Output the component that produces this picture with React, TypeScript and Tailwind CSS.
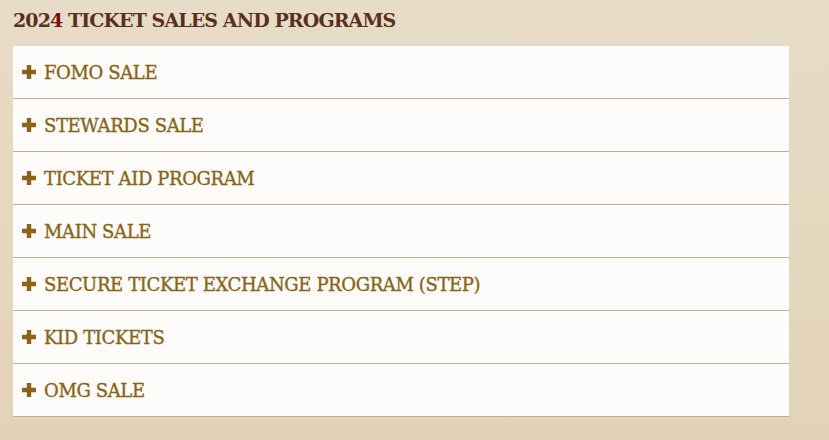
import React from "react";

const items = [
  "FOMO SALE",
  "STEWARDS SALE",
  "TICKET AID PROGRAM",
  "MAIN SALE",
  "SECURE TICKET EXCHANGE PROGRAM (STEP)",
  "KID TICKETS",
  "OMG SALE",
];

function Plus() {
  return (
    <svg width="14" height="14" viewBox="0 0 14 14" className="shrink-0">
      <path d="M4.8 0h4.4v4.8h4.8v4.4H9.2v4.8H4.8V9.2H0V4.8h4.8z" fill="#8a6414" />
    </svg>
  );
}

export default function App() {
  return (
    <div
      className="w-[829px] h-[440px] bg-gradient-to-b from-[#e7dcc7] to-[#e3d3b6] pl-[13px] pt-[8px]"
      style={{ fontFamily: '"DejaVu Serif", "Liberation Serif", serif' }}
    >
      <h2 className="text-[19px] leading-[24px] font-bold text-[#5a301c] h-[38px] tracking-[-0.9px]">
        202<span className="text-[#7a1010]">4</span> TICKET SALES AND PROGRAMS
      </h2>
      <div className="w-[776px] bg-[#fdfcfa]">
        {items.map((t) => (
          <div
            key={t}
            className="h-[53px] border-b border-[#bdb09a] flex items-center pl-[9px] gap-[8px]"
          >
            <Plus />
            <span className="text-[18px] text-[#8a6414] tracking-[-0.38px] [-webkit-text-stroke:0.35px_#8a6414]">
              {t}
            </span>
          </div>
        ))}
      </div>
    </div>
  );
}
